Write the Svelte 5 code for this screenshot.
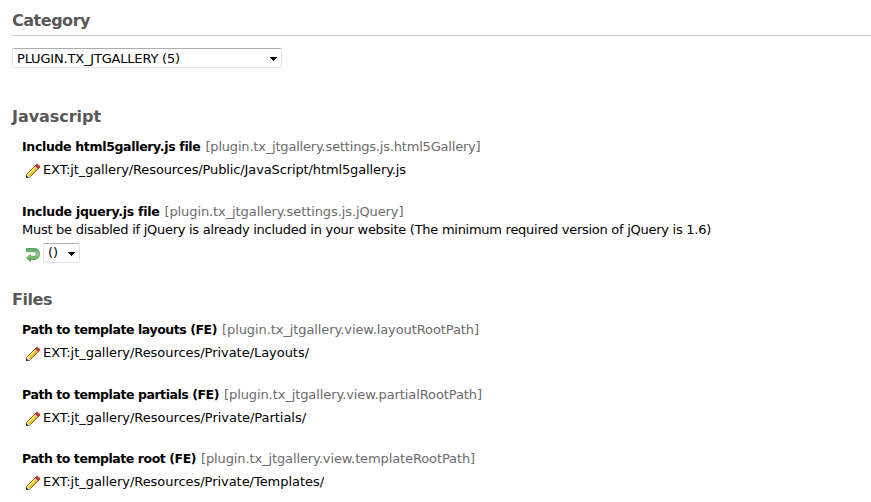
<script>
  const groups = [
    {
      title: 'Javascript', width: 89,
      settings: [
        { label: 'Include html5gallery.js file', lw: 178, key: '[plugin.tx_jtgallery.settings.js.html5Gallery]', kw: 275, value: 'EXT:jt_gallery/Resources/Public/JavaScript/html5gallery.js', vw: 363, height: 65 },
        { label: 'Include jquery.js file', lw: 137, key: '[plugin.tx_jtgallery.settings.js.jQuery]', kw: 239, description: 'Must be disabled if jQuery is already included in your website (The minimum required version of jQuery is 1.6)', dw: 689, height: 87 }
      ]
    },
    {
      title: 'Files', width: 40,
      settings: [
        { label: 'Path to template layouts (FE)', lw: 195, key: '[plugin.tx_jtgallery.view.layoutRootPath]', kw: 257, value: 'EXT:jt_gallery/Resources/Private/Layouts/', vw: 266, height: 65 },
        { label: 'Path to template partials (FE)', lw: 197, key: '[plugin.tx_jtgallery.view.partialRootPath]', kw: 258, value: 'EXT:jt_gallery/Resources/Private/Partials/', vw: 263, height: 64 },
        { label: 'Path to template root (FE)', lw: 174, key: '[plugin.tx_jtgallery.view.templateRootPath]', kw: 274, value: 'EXT:jt_gallery/Resources/Private/Templates/', vw: 281, height: 50 }
      ]
    }
  ];

  // Spreads the letters so that the text run takes up the given width.
  function fit(node, width) {
    const natural = node.getBoundingClientRect().width;
    node.style.letterSpacing = `${(width - natural) / node.textContent.length}px`;
  }
</script>

{#snippet arrow()}
  <svg class="arrow" width="7" height="4" viewBox="0 0 7 4" shape-rendering="crispEdges"><path d="M0 0h7v1H6v1H5v1H4v1H3V3H2V2H1V1H0z" /></svg>
{/snippet}

<main>
  <h2 class="category"><span use:fit={78}>Category</span></h2>
  <div class="select wide" role="combobox" aria-expanded="false" aria-controls="none" tabindex="0">
    <span use:fit={163}>PLUGIN.TX_JTGALLERY (5)</span>{@render arrow()}
  </div>

  {#each groups as group}
    <section>
      <h2><span use:fit={group.width}>{group.title}</span></h2>
      {#each group.settings as s}
        <div class="setting" style:height="{s.height}px">
          <div class="line"><b use:fit={s.lw}>{s.label}</b><span class="key" use:fit={s.kw}>{s.key}</span></div>
          {#if s.description}
            <div class="line"><span use:fit={s.dw}>{s.description}</span></div>
            <div class="control">
              <svg class="icon undo" width="16" height="16" viewBox="0 0 16 16">
                <defs><linearGradient id="green" x2="0" y2="1"><stop stop-color="#4fa35a" /><stop offset=".45" stop-color="#9fd39a" /><stop offset="1" stop-color="#459b4c" /></linearGradient></defs>
                <path d="M1.500 1.500H9.500C12.800 1.500 14.500 3.700 14.500 6.800S12.800 12.500 9.500 12.500H5.500V14.500L1.500 11 5.500 7.500V9.300H9.200C10.700 9.300 11.300 8.300 11.300 7S10.700 4.700 9.200 4.700H1.500z" fill="url(#green)" stroke="#4b9955" stroke-width=".8" />
              </svg>
              <div class="select small" role="combobox" aria-expanded="false" aria-controls="none" tabindex="0"><span use:fit={10}>()</span>{@render arrow()}</div>
            </div>
          {:else}
            <div class="value">
              <svg class="icon" width="16" height="16" viewBox="0 0 16 16">
                <path d="M1.500 14.500V11.500L10.500 2.500l3 3-9 9z" fill="#f8cb30" />
                <path d="M2.900 11.300l7.800-7.800" stroke="#fff08c" stroke-width="1.300" />
                <path d="M4.200 13.300l8-8" stroke="#e8a520" stroke-width="1" />
                <path d="M1.500 14.500v-3l1-.5 2.500 2.500-.5 1z" fill="#f6e8c0" />
                <path d="M10 3L11.500 1.500h1.500l1.500 1.500v1.500L13 6z" fill="#d92f24" />
                <path d="M9.700 3.300l3 3" stroke="#f4c4a0" stroke-width=".8" />
                <path d="M1.500 14.500V11.500l10-10h1.500l1.500 1.500v1.500l-10 10z" fill="none" stroke="#63502b" stroke-width=".8" />
                <path d="M1 13h1.500v2H1z" fill="#222" />
              </svg>
              <span use:fit={s.vw}>{s.value}</span>
            </div>
          {/if}
        </div>
      {/each}
    </section>
  {/each}
</main>

<style>
  :global(body) { background: #fff; overflow: hidden; }
  main {
    box-sizing: border-box;
    height: 502px;
    padding: 10px 0 0 12px;
    overflow: hidden;
    font: 13px/18px Verdana, "DejaVu Sans", sans-serif;
    color: #000;
    white-space: nowrap;
  }
  h2 { margin: 0 0 11px; height: 20px; font-size: 16px; line-height: 22px; color: #585858; }
  .category { height: 25px; margin-bottom: 12px; border-bottom: 1px solid #ccc; }
  .select {
    box-sizing: border-box;
    display: flex;
    align-items: center;
    justify-content: space-between;
    height: 20px;
    padding: 0 4px;
    border: 1px solid #e3e3eb;
    border-top-color: #abadb3;
    border-radius: 2px;
    background: #fff;
    line-height: 20px;
  }
  .wide { width: 270px; margin-bottom: 38px; }
  .wide span { padding-top: 1px; }
  .small { width: 37px; }
  .arrow { flex: none; margin-top: 1px; }
  .setting { padding-left: 10px; }
  .line { display: flex; gap: 5px; height: 18px; line-height: 20px; }
  b { font-size: 12.5px; }
  .key { color: #6b6b6b; }
  .value, .control { display: flex; padding-left: 3px; gap: 2px; }
  .value { margin-top: 6px; }
  .control { margin-top: 5px; }
  .icon { flex: none; margin-top: 2px; }
  .undo { margin-top: 4px; }
</style>
